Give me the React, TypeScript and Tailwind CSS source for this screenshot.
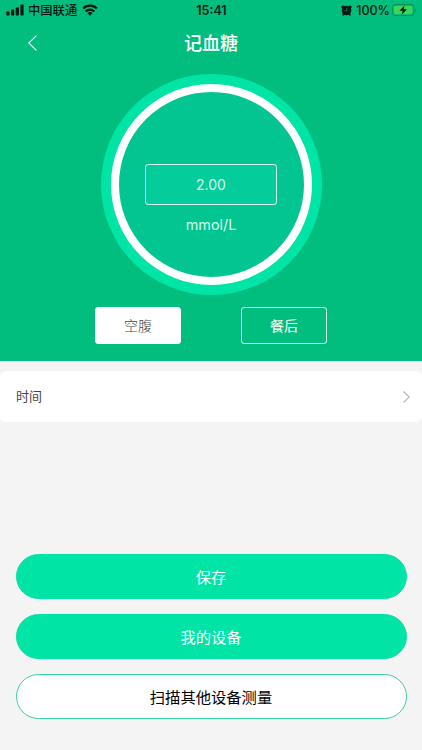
import { useState } from 'react';

function SignalIcon() {
  return (
    <svg className="w-[18px] h-3" viewBox="0 0 18 12" fill="currentColor">
      <rect x="0.3" y="7.5" width="3.2" height="4" rx="0.8" />
      <rect x="5" y="5.6" width="3.2" height="5.9" rx="0.8" />
      <rect x="9.7" y="3.2" width="3.2" height="8.3" rx="0.8" />
      <rect x="14.4" y="0.4" width="3.2" height="11.1" rx="0.8" />
    </svg>
  );
}

function WifiIcon() {
  return (
    <svg className="w-4 h-3" viewBox="0 0 16 12" fill="none" stroke="currentColor" strokeWidth={2.3}>
      <path d="M1.1 4.5a9.8 9.8 0 0 1 13.8 0" />
      <path d="M3.7 7.5a6.1 6.1 0 0 1 8.6 0" />
      <path d="M8 11.7 5.5 9.2a3.5 3.5 0 0 1 5 0z" fill="currentColor" stroke="none" />
    </svg>
  );
}

function AlarmIcon() {
  return (
    <svg className="w-[11px] h-[11px]" viewBox="0 0 11 11" fill="currentColor">
      <circle cx="5.5" cy="5.5" r="4.8" />
      <circle cx="2" cy="2" r="1.6" />
      <circle cx="9" cy="2" r="1.6" />
      <path d="m2.6 8.8-.5 1M8.4 8.8l.5 1" stroke="currentColor" strokeWidth="1.6" strokeLinecap="round" />
      <path d="M5.8 3v2.8H3.6" fill="none" stroke="#04be7e" strokeWidth="0.6" />
    </svg>
  );
}

function BatteryIcon() {
  return (
    <svg className="w-[25px] h-3" viewBox="0 0 25 12" fill="none">
      <rect x="0.5" y="0.5" width="21.4" height="11" rx="3" stroke="#06915a" />
      <rect x="2" y="2" width="18.4" height="8" rx="1.6" fill="#39d65c" />
      <path d="M23 4.2v3.6c.8-.3 1.3-1 1.3-1.8S23.8 4.5 23 4.2z" fill="#06915a" />
      <path d="M12.6 1.5 7.4 6.8h3.3l-1 3.9 5.2-5.4h-3.3z" fill="#04160e" />
    </svg>
  );
}

function StatusBar() {
  return (
    <div className="grid grid-cols-3 items-center h-5 pl-1.5 pr-[5px] text-[#03180f]">
      <div className="flex items-center">
        <SignalIcon />
        <span className="ml-1 mr-[5px] pt-0.5 text-[12.3px] leading-[18px] font-medium">中国联通</span>
        <WifiIcon />
      </div>
      <span className="pt-px text-center font-semibold font-['Inter'] text-[12.5px] leading-[19px]">15:41</span>
      <div className="flex items-center justify-end">
        <AlarmIcon />
        <span className="ml-1 mr-0.5 pt-px font-medium font-['Inter'] text-[12.5px] leading-[19px]">100%</span>
        <BatteryIcon />
      </div>
    </div>
  );
}

const ACTIONS = [
  { label: '保存', style: 'bg-[#00e5a6] border-[#00e5a6] text-white' },
  { label: '我的设备', style: 'bg-[#00e5a6] border-[#00e5a6] text-white' },
  { label: '扫描其他设备测量', style: 'bg-white border-[#34d59e] text-black' },
];

export default function App() {
  const [period, setPeriod] = useState('空腹');
  const [value, setValue] = useState('2.00');

  return (
    <div className="h-[750px] flex flex-col bg-[#f4f4f4] font-['Liberation_Sans','Noto_Sans_CJK_SC',sans-serif]">
      <section className="h-[361px] bg-[#02be7e] flex flex-col items-center">
        <div className="w-full">
          <StatusBar />
        </div>

        {/* Header */}
        <header className="w-full h-[46px] grid grid-cols-3 items-center px-7 text-white">
          <svg className="w-[9px] h-4" viewBox="0 0 9 16" fill="none" stroke="currentColor" strokeWidth={1.1}>
            <path d="M8.4.6.8 8l7.6 7.4" />
          </svg>
          <h1 className="pt-px text-center text-lg leading-6 font-medium">记血糖</h1>
        </header>

        {/* Reading */}
        <div className="mt-[7.5px] size-[221px] shrink-0 rounded-full bg-[#00e5a6] p-2.5">
          <div className="size-full rounded-full border-8 border-white bg-[#02c591] flex flex-col items-center">
            <input
              value={value}
              onChange={(e) => setValue(e.target.value)}
              className="mt-[72px] w-[132px] h-[41px] rounded-[3px] border border-[#d5f8ec] bg-[#04cd9b] text-center font-['Inter'] text-[14px] text-[#d5f8ec] outline-none"
            />
            <span className="mt-2 font-['Inter'] text-[14.4px] leading-6 text-[#d5f8ec]">mmol/L</span>
          </div>
        </div>

        {/* Before or after the meal */}
        <div className="mt-3 flex gap-[60px]">
          {['空腹', '餐后'].map((name) => (
            <button
              key={name}
              onClick={() => setPeriod(name)}
              className={`w-[86px] h-[37px] rounded-[3px] border pt-px text-sm ${
                period === name ? 'bg-white border-white font-light text-[#444]' : 'border-[#d5f8ec] text-white'
              }`}
            >
              {name}
            </button>
          ))}
        </div>
      </section>

      {/* Time */}
      <button className="mt-2.5 h-[51px] shrink-0 rounded-md bg-white pl-4 pr-3 flex items-center justify-between">
        <span className="text-[13px] text-[#444]">时间</span>
        <svg className="w-[7px] h-3" viewBox="0 0 7 12" fill="none" stroke="#b5b5b5" strokeWidth={1.1}>
          <path d="m.5.5 5.7 5.5L.5 11.5" />
        </svg>
      </button>

      <div className="mt-auto mb-[31px] px-[15.5px] flex flex-col gap-[15px]">
        {ACTIONS.map((action) => (
          <button key={action.label} className={`h-[45px] rounded-full border pt-[3px] text-[15.3px] ${action.style}`}>
            {action.label}
          </button>
        ))}
      </div>
    </div>
  );
}
